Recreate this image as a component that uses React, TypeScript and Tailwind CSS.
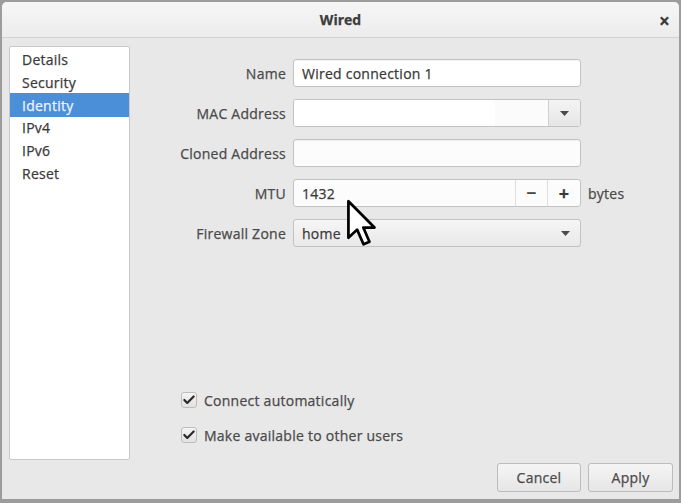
import { Check } from "lucide-react";

const sections = ["Details", "Security", "Identity", "IPv4", "IPv6", "Reset"];

const font = { fontFamily: '"Open Sans", "Noto Sans", sans-serif' };

function Caret() {
  return (
    <svg width="9" height="5" viewBox="0 0 9 5">
      <path d="M0 0 L9 0 L4.5 5 Z" fill="#4a4a4a" />
    </svg>
  );
}

function Label({ children }: { children: React.ReactNode }) {
  return (
    <div className="w-[147px] shrink-0 text-right text-[14px] text-[#4a4a4a] pr-px">{children}</div>
  );
}

export default function App() {
  return (
    <div
      className="w-[681px] h-[503px] bg-[#9c9c9c] pl-[2px] pr-[2px] pt-[2px] pb-[4px] relative overflow-hidden tracking-[0.25px] [-webkit-text-stroke:0.25px]"
      style={font}
    >
      <div className="w-full h-full flex flex-col bg-[#e8e8e8] rounded-t-[5px] overflow-hidden">
        {/* Title bar */}
        <div className="h-[36px] shrink-0 flex items-center justify-center relative bg-gradient-to-b from-[#f6f6f6] to-[#ececec] border-b border-[#d2d2d2]">
          <span className="text-[14px] font-bold text-[#3c3c3c] tracking-normal">Wired</span>
          <span className="absolute right-[9px] top-[5px] text-[19px] font-bold text-[#3a3a3a]">×</span>
        </div>

        {/* Body */}
        <div className="flex-1 flex pl-[7px] pr-[6px] pt-[8px] pb-[7px]">
          {/* Sidebar */}
          <div className="w-[121px] h-[414px] shrink-0 bg-white border border-[#c9c9c9] rounded-[2px] pt-[1px]">
            {sections.map((s) => (
              <div
                key={s}
                className={
                  s === "Identity"
                    ? "h-[24px] -my-px flex items-center pl-[12px] text-[14px] bg-[#4a8fd8] text-[#eef3fb]"
                    : "h-[23px] flex items-center pl-[12px] text-[14px] text-[#3a3a3a]"
                }
              >
                {s}
              </div>
            ))}
          </div>

          {/* Right column */}
          <div className="flex-1 flex flex-col ml-[10px]">
            <div className="flex flex-col gap-[12px] pt-[13px]">
              {/* Name */}
              <div className="flex items-center gap-[6px]">
                <Label>Name</Label>
                <div className="w-[288px] h-[28px] rounded-[3px] border border-[#c2c2c2] bg-white flex items-center px-[8px] text-[14px] text-[#3a3a3a] shadow-[inset_0_1px_1px_rgba(0,0,0,0.06)]">
                  Wired connection 1
                </div>
              </div>
              {/* MAC */}
              <div className="flex items-center gap-[6px]">
                <Label>MAC Address</Label>
                <div className="w-[288px] h-[28px] rounded-[3px] border border-[#c2c2c2] bg-[#fbfbfb] flex overflow-hidden">
                  <div className="flex-1 flex">
                    <div className="w-[201px] h-full bg-white" />
                  </div>
                  <div className="w-[32px] h-full border-l border-[#cfcfcf] bg-gradient-to-b from-[#f4f4f4] to-[#e6e6e6] flex items-center justify-center">
                    <Caret />
                  </div>
                </div>
              </div>
              {/* Cloned */}
              <div className="flex items-center gap-[6px]">
                <Label>Cloned Address</Label>
                <div className="w-[288px] h-[28px] rounded-[3px] border border-[#c2c2c2] bg-[#fcfcfc] shadow-[inset_0_1px_1px_rgba(0,0,0,0.06)]" />
              </div>
              {/* MTU */}
              <div className="flex items-center gap-[6px]">
                <Label>MTU</Label>
                <div className="w-[288px] h-[28px] rounded-[3px] border border-[#c2c2c2] bg-[#fcfcfc] flex overflow-hidden">
                  <div className="flex-1 flex items-center px-[8px] text-[14px] text-[#3a3a3a]">1432</div>
                  <div className="w-[32px] h-full border-l border-[#dedede] flex items-center justify-center text-[17px] font-bold text-[#4a4a4a]">
                    −
                  </div>
                  <div className="w-[33px] h-full border-l border-[#dedede] flex items-center justify-center text-[18px] font-bold text-[#3a3a3a]">
                    +
                  </div>
                </div>
                <span className="ml-px text-[14px] text-[#4a4a4a]">bytes</span>
              </div>
              {/* Firewall */}
              <div className="flex items-center gap-[6px]">
                <Label>Firewall Zone</Label>
                <div className="w-[288px] h-[28px] rounded-[3px] border border-[#c2c2c2] bg-gradient-to-b from-[#f6f6f6] to-[#e9e9e9] flex items-center px-[8px] text-[14px] text-[#3a3a3a]">
                  <span className="flex-1">home</span>
                  <span className="mr-[2px]">
                    <Caret />
                  </span>
                </div>
              </div>
            </div>

            <div className="flex-1" />

            {/* Checkboxes */}
            <div className="flex flex-col gap-[15px] ml-[41px]">
              {["Connect automatically", "Make available to other users"].map((t) => (
                <div key={t} className="h-[20px] flex items-center gap-[7px]">
                  <div className="w-[16px] h-[16px] rounded-[3px] border border-[#bdbdbd] bg-gradient-to-b from-[#f4f4f4] to-[#e2e2e2] flex items-center justify-center">
                    <Check size={14} strokeWidth={3.8} className="text-[#2a2a2a]" />
                  </div>
                  <span className="text-[14px] text-[#4a4a4a]">{t}</span>
                </div>
              ))}
            </div>

            {/* Buttons */}
            <div className="flex justify-end gap-[7px] mt-[18px]">
              <div className="w-[84px] h-[29px] rounded-[3px] border border-[#bcbcbc] bg-gradient-to-b from-[#f5f5f5] to-[#e6e6e6] flex items-center justify-center text-[14px] text-[#4a4a4a]">
                Cancel
              </div>
              <div className="w-[85px] h-[29px] rounded-[3px] border border-[#bcbcbc] bg-gradient-to-b from-[#f5f5f5] to-[#e6e6e6] flex items-center justify-center text-[14px] text-[#4a4a4a]">
                Apply
              </div>
            </div>
          </div>
        </div>
      </div>

      {/* Mouse cursor */}
      <svg className="absolute left-[345px] top-[199px]" width="32" height="48" viewBox="0 0 13 21">
        <path
          d="M1 1 L1 17 L4.8 13.4 L7.6 19.8 L10.2 18.7 L7.5 12.5 L12.4 12.5 Z"
          fill="#ffffff"
          stroke="#000000"
          strokeWidth="1.2"
          strokeLinejoin="round"
        />
      </svg>
    </div>
  );
}
